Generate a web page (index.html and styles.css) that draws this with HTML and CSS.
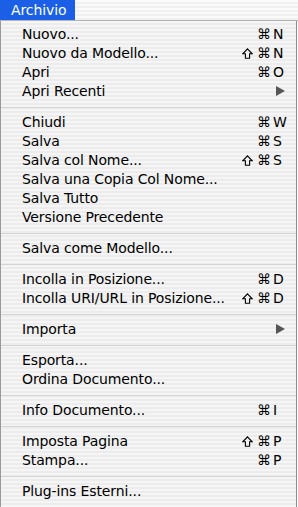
FILE: index.html
```html
<!DOCTYPE html>
<html>
<head>
<meta charset="utf-8">
<link rel="stylesheet" href="styles.css">
</head>
<body>
<div class="menubar"><span class="title">Archivio</span></div>
<div class="menu">
  <div class="item"><span class="label">Nuovo...</span><span class="mods">⌘</span><span class="key">N</span></div>
  <div class="item"><span class="label">Nuovo da Modello...</span><span class="mods"><svg class="shift" viewBox="0 0 11 11"><path d="M5.5 0.8 L10.2 5.8 H7.6 V10.3 H3.4 V5.8 H0.8 Z"/></svg>⌘</span><span class="key">N</span></div>
  <div class="item"><span class="label">Apri</span><span class="mods">⌘</span><span class="key">O</span></div>
  <div class="item"><span class="label">Apri Recenti</span><span class="mods"></span><span class="key"><span class="arrow"></span></span></div>
  <div class="sep"></div>
  <div class="item"><span class="label">Chiudi</span><span class="mods">⌘</span><span class="key">W</span></div>
  <div class="item"><span class="label">Salva</span><span class="mods">⌘</span><span class="key">S</span></div>
  <div class="item"><span class="label">Salva col Nome...</span><span class="mods"><svg class="shift" viewBox="0 0 11 11"><path d="M5.5 0.8 L10.2 5.8 H7.6 V10.3 H3.4 V5.8 H0.8 Z"/></svg>⌘</span><span class="key">S</span></div>
  <div class="item"><span class="label">Salva una Copia Col Nome...</span><span class="mods"></span><span class="key"></span></div>
  <div class="item"><span class="label">Salva Tutto</span><span class="mods"></span><span class="key"></span></div>
  <div class="item"><span class="label">Versione Precedente</span><span class="mods"></span><span class="key"></span></div>
  <div class="sep"></div>
  <div class="item"><span class="label">Salva come Modello...</span><span class="mods"></span><span class="key"></span></div>
  <div class="sep"></div>
  <div class="item"><span class="label">Incolla in Posizione...</span><span class="mods">⌘</span><span class="key">D</span></div>
  <div class="item"><span class="label">Incolla URI/URL in Posizione...</span><span class="mods"><svg class="shift" viewBox="0 0 11 11"><path d="M5.5 0.8 L10.2 5.8 H7.6 V10.3 H3.4 V5.8 H0.8 Z"/></svg>⌘</span><span class="key">D</span></div>
  <div class="sep"></div>
  <div class="item"><span class="label">Importa</span><span class="mods"></span><span class="key"><span class="arrow"></span></span></div>
  <div class="sep"></div>
  <div class="item"><span class="label">Esporta...</span><span class="mods"></span><span class="key"></span></div>
  <div class="item"><span class="label">Ordina Documento...</span><span class="mods"></span><span class="key"></span></div>
  <div class="sep"></div>
  <div class="item"><span class="label">Info Documento...</span><span class="mods">⌘</span><span class="key">I</span></div>
  <div class="sep"></div>
  <div class="item"><span class="label">Imposta Pagina</span><span class="mods"><svg class="shift" viewBox="0 0 11 11"><path d="M5.5 0.8 L10.2 5.8 H7.6 V10.3 H3.4 V5.8 H0.8 Z"/></svg>⌘</span><span class="key">P</span></div>
  <div class="item"><span class="label">Stampa...</span><span class="mods">⌘</span><span class="key">P</span></div>
  <div class="sep"></div>
  <div class="item"><span class="label">Plug-ins Esterni...</span><span class="mods"></span><span class="key"></span></div>
</div>
</body>
</html>
```
FILE: styles.css
```css
html, body {
  margin: 0;
  padding: 0;
  background: #ffffff;
}
body {
  font-family: "DejaVu Sans", "Liberation Sans", sans-serif;
  font-size: 14px;
  color: #000;
  width: 298px;
  height: 507px;
  overflow: hidden;
}
.menubar {
  height: 20px;
  border-bottom: 1px solid #b4b4b4;
  background: repeating-linear-gradient(to bottom, #fafafa 0, #fafafa 2px, #f0f0f0 2px, #f0f0f0 4px);
  display: flex;
}
.title {
  width: 64px;
  padding-left: 11px;
  background: #1b5fe6;
  color: #fff;
  line-height: 20px;
  letter-spacing: -0.1px;
}
.menu {
  width: 295px;
  border-left: 1px solid #9a9a9a;
  border-right: 1px solid #8c8c8c;
  border-bottom: 1px solid #6a6a6a;
  padding: 4px 0 6px;
  background: repeating-linear-gradient(to bottom, #f5f5f5 0, #f5f5f5 2px, #ececec 2px, #ececec 4px);
}
.item {
  display: grid;
  grid-template-columns: 1fr auto 14px;
  height: 19px;
  line-height: 19px;
  padding-left: 21px;
  padding-right: 9px;
  white-space: nowrap;
}
.label {
  letter-spacing: -0.12px;
}
.mods {
  text-align: right;
  padding-right: 2px;
}
.shift {
  width: 11px;
  height: 11px;
  margin-right: 4px;
  vertical-align: -1px;
  fill: none;
  stroke: #000;
  stroke-width: 1.1;
  stroke-linejoin: miter;
}
.key {
  text-align: left;
  position: relative;
}
.arrow {
  position: absolute;
  left: 3px;
  top: 4px;
  width: 0;
  height: 0;
  border-left: 9px solid #555;
  border-top: 5px solid transparent;
  border-bottom: 5px solid transparent;
}
.sep {
  height: 12px;
  display: flex;
  align-items: center;
}
.sep::before {
  content: "";
  display: block;
  width: 100%;
  height: 1px;
  background: #d4d4d4;
}
```
